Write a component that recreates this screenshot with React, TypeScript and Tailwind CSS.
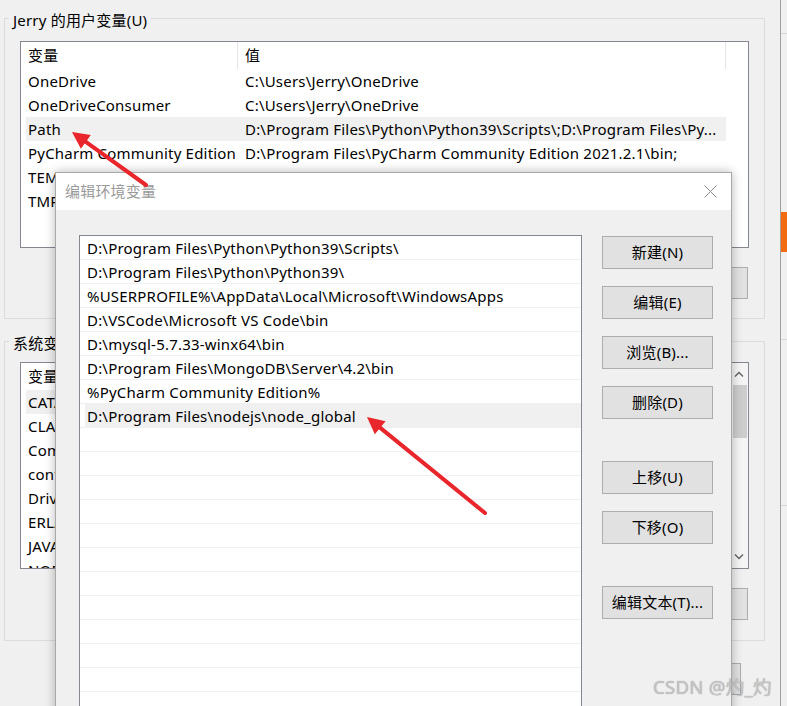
import React from 'react';

type Row = [string, string];

const userVars: Row[] = [
  ['OneDrive', 'C:\\Users\\Jerry\\OneDrive'],
  ['OneDriveConsumer', 'C:\\Users\\Jerry\\OneDrive'],
  ['Path', 'D:\\Program Files\\Python\\Python39\\Scripts\\;D:\\Program Files\\Py...'],
  ['PyCharm Community Edition', 'D:\\Program Files\\PyCharm Community Edition 2021.2.1\\bin;'],
  ['TEMP', 'C:\\Users\\Jerry\\AppData\\Local\\Temp'],
  ['TMP', 'C:\\Users\\Jerry\\AppData\\Local\\Temp'],
];

const systemVars: Row[] = [
  ['CATALINA_HOME', 'D:\\apache-tomcat-9.0.52'],
  ['CLASSPATH', '.;%JAVA_HOME%\\lib;'],
  ['ComSpec', 'C:\\Windows\\system32\\cmd.exe'],
  ['configsetroot', 'C:\\Windows\\ConfigSetRoot'],
  ['DriverData', 'C:\\Windows\\System32\\Drivers\\DriverData'],
  ['ERLANG_HOME', 'D:\\Program Files\\erl-24.0'],
  ['JAVA_HOME', 'D:\\Java\\jdk1.8.0_301'],
  ['NODE_PATH', 'D:\\Program Files\\nodejs\\node_global\\node_modules'],
];

const pathItems = [
  'D:\\Program Files\\Python\\Python39\\Scripts\\',
  'D:\\Program Files\\Python\\Python39\\',
  '%USERPROFILE%\\AppData\\Local\\Microsoft\\WindowsApps',
  'D:\\VSCode\\Microsoft VS Code\\bin',
  'D:\\mysql-5.7.33-winx64\\bin',
  'D:\\Program Files\\MongoDB\\Server\\4.2\\bin',
  '%PyCharm Community Edition%',
  'D:\\Program Files\\nodejs\\node_global',
];

const WinButton = ({ label, className = '' }: { label: string; className?: string }) => (
  <div
    className={`flex items-center justify-center bg-[#e1e1e1] border border-[#adadad] whitespace-nowrap shrink-0 ${className}`}
  >
    {label}
  </div>
);

const ListView = ({ rows, selected, scroll }: { rows: Row[]; selected: number; scroll?: boolean }) => (
  <div className="flex h-[207px] border border-[#828790] bg-white overflow-hidden">
    <div className="flex-1 min-w-0">
      {/* header */}
      <div className="flex h-[27px]">
        <div className="w-[217px] pl-[7px] flex items-center border-r border-[#e5e5e5]">变量</div>
        <div className="w-[488px] pl-[7px] flex items-center border-r border-[#e5e5e5]">值</div>
      </div>
      <div className="pl-[5px]">
        {rows.map(([name, value], i) => (
          <div
            key={name}
            className={`flex w-[700px] h-[24px] pt-[1px] items-center ${i === selected ? 'bg-[#f0f0f0]' : ''}`}
          >
            <div className="w-[212px] pl-[2px] whitespace-nowrap overflow-hidden">{name}</div>
            <div className="flex-1 pl-[7px] whitespace-nowrap overflow-hidden">{value}</div>
          </div>
        ))}
      </div>
    </div>
    {scroll && (
      <div className="w-[19px] bg-[#f5f5f5] flex flex-col">
        <div className="h-[22px] flex items-center justify-center">
          <svg width="10" height="6" viewBox="0 0 10 6">
            <path d="M1 5.5 L5 1.5 L9 5.5" fill="none" stroke="#606060" strokeWidth="1.3" />
          </svg>
        </div>
        <div className="ml-[4px] w-[14px] h-[53px] bg-[#cdcdcd]" />
        <div className="flex-1" />
        <div className="h-[22px] flex items-center justify-center">
          <svg width="10" height="6" viewBox="0 0 10 6">
            <path d="M1 0.5 L5 4.5 L9 0.5" fill="none" stroke="#606060" strokeWidth="1.3" />
          </svg>
        </div>
      </div>
    )}
  </div>
);

const GroupBox = ({
  title,
  rows,
  selected,
  scroll,
  className,
  buttons,
}: {
  title: string;
  rows: Row[];
  selected: number;
  scroll?: boolean;
  className: string;
  buttons: string[];
}) => (
  <fieldset className={`border border-[#dcdcdc] ${className}`}>
    <legend className="ml-[4px] px-[4px] pt-[4px] leading-[20px]">{title}</legend>
    <div className="px-[15px]">
      <ListView rows={rows} selected={selected} scroll={scroll} />
      <div className="mt-[19px] flex justify-end gap-[10px] pr-[1px]">
        {buttons.map((b) => (
          <WinButton key={b} label={b} className="w-[94px] h-[32px]" />
        ))}
      </div>
    </div>
  </fieldset>
);

const BackgroundWindow = () => (
  <div className="w-[781px] h-full border-r border-[#a0a0a0] pl-[4px] pr-[15px] flex flex-col">
    <GroupBox
      title="Jerry 的用户变量(U)"
      rows={userVars}
      selected={2}
      className="mt-[6px] pb-[19px] [&>div]:pt-[11px]"
      buttons={['新建(N)...', '编辑(E)...', '删除(D)']}
    />
    <GroupBox
      title="系统变量(S)"
      rows={systemVars}
      selected={0}
      scroll
      className="mt-[10px] pb-[20px] [&>div]:pt-[9px]"
      buttons={['新建(W)...', '编辑(I)...', '删除(L)']}
    />
    <div className="mt-[22px] flex justify-end gap-[10px] pr-[24px]">
      <WinButton label="确定" className="w-[94px] h-[32px]" />
      <WinButton label="取消" className="w-[94px] h-[32px]" />
    </div>
  </div>
);

const SideStrip = () => (
  <div className="flex-1 flex flex-col">
    <div className="h-[33px]" />
    <div className="h-px bg-[#d8d8d8]" />
    <div className="h-[178px]" />
    <div className="h-[40px] bg-[#f26b11]" />
    <div className="h-[87px]" />
    <div className="h-px bg-[#d8d8d8]" />
    <div className="h-[165px]" />
    <div className="h-px bg-[#d8d8d8]" />
  </div>
);

const EditDialog = () => (
  <div className="absolute left-[55px] top-[172px] w-[677px] h-[560px] border border-[#a8a8a8] bg-[#f0f0f0] shadow-[0_0_10px_rgba(0,0,0,0.28)] flex flex-col">
    <div className="h-[37px] shrink-0 bg-white flex items-center pl-[9px] pr-[14px]">
      <span className="text-[#9a9a9a]">编辑环境变量</span>
      <svg className="ml-auto" width="13" height="13" viewBox="0 0 13 13">
        <path d="M0.5 0.5 L12.5 12.5 M12.5 0.5 L0.5 12.5" stroke="#8a8a8a" strokeWidth="1" />
      </svg>
    </div>
    <div className="flex-1 min-h-0 flex pl-[23px] pt-[25px]">
      <div className="w-[503px] h-[500px] shrink-0 border border-[#828790] bg-white overflow-hidden">
        {Array.from({ length: 22 }).map((_, i) => (
          <div key={i} className="h-[24px] border-b border-[#f0f0f0] pl-[5px]">
            <div
              className={`h-full pl-[2px] pt-[2px] flex items-center whitespace-nowrap ${i === 7 ? 'bg-[#f0f0f0]' : ''}`}
            >
              {pathItems[i] ?? ''}
            </div>
          </div>
        ))}
      </div>
      <div className="ml-[20px] mt-[1px] w-[111px] flex flex-col">
        <WinButton label="新建(N)" className="h-[33px]" />
        <WinButton label="编辑(E)" className="h-[33px] mt-[17px]" />
        <WinButton label="浏览(B)..." className="h-[33px] mt-[17px]" />
        <WinButton label="删除(D)" className="h-[33px] mt-[17px]" />
        <WinButton label="上移(U)" className="h-[33px] mt-[42px]" />
        <WinButton label="下移(O)" className="h-[33px] mt-[17px]" />
        <WinButton label="编辑文本(T)..." className="h-[33px] mt-[42px]" />
      </div>
    </div>
  </div>
);

const Arrow = ({ x1, y1, x2, y2 }: { x1: number; y1: number; x2: number; y2: number }) => {
  const dx = x2 - x1;
  const dy = y2 - y1;
  const len = Math.hypot(dx, dy);
  const ux = dx / len;
  const uy = dy / len;
  const hl = 17;
  const hw = 8.5;
  const bx = x2 - ux * hl;
  const by = y2 - uy * hl;
  const pts = `${x2},${y2} ${bx - uy * hw},${by + ux * hw} ${bx + uy * hw},${by - ux * hw}`;
  return (
    <g>
      <line x1={x1} y1={y1} x2={bx + ux * 3} y2={by + uy * 3} stroke="#e8262b" strokeWidth="4" strokeLinecap="round" />
      <polygon points={pts} fill="#e8262b" />
    </g>
  );
};

export default function App() {
  return (
    <div className="relative w-[787px] h-[706px] overflow-hidden bg-[#f0f0f0] text-[15px] tracking-[0.2px] text-black font-['Noto_Sans','Noto_Sans_CJK_SC',sans-serif]">
      <div className="flex h-full">
        <BackgroundWindow />
        <SideStrip />
      </div>
      <EditDialog />
      <svg className="absolute inset-0 pointer-events-none" width="787" height="706">
        <Arrow x1={146} y1={185} x2={72} y2={132} />
        <Arrow x1={485} y1={513} x2={367} y2={417} />
      </svg>
      <div className="absolute left-[653px] top-[676px] leading-[22px] text-[18.5px] tracking-[0.3px] text-[#c4c4c4] [text-shadow:0_0_1px_rgba(80,80,80,0.5)]">
        CSDN @灼_灼
      </div>
    </div>
  );
}
